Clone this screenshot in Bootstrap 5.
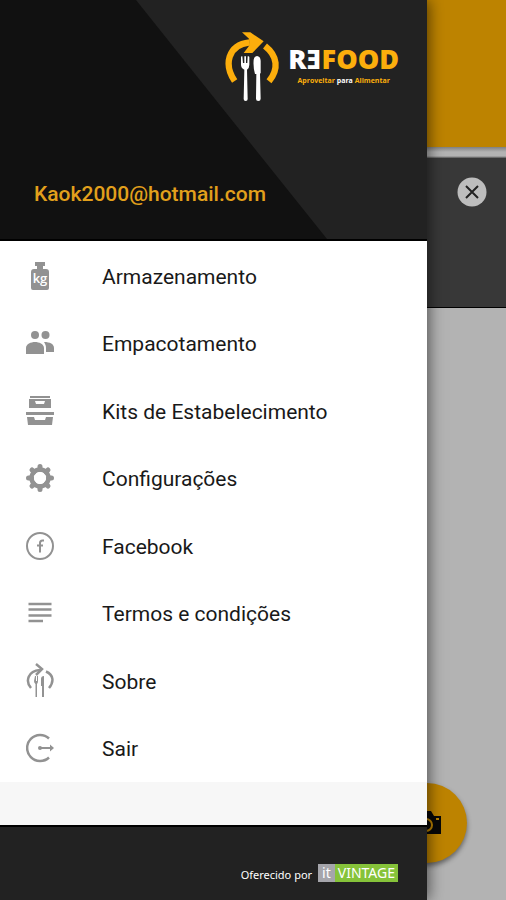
<!DOCTYPE html>
<html lang="pt">
<head>
<meta charset="utf-8">
<meta name="viewport" content="width=device-width, initial-scale=1">
<title>Refood</title>
<link href="https://cdn.jsdelivr.net/npm/bootstrap@5.3.0/dist/css/bootstrap.min.css" rel="stylesheet">
<style>
  body { font-family: Roboto, "Liberation Sans", sans-serif; background: #b3b3b3; }
  .app-screen { min-height: 100vh; }
  .app-bar { height: 147px; background: #bd8300; }
  .app-divider { height: 11px; background: linear-gradient(#808080, #b3b3b3 5px, #b3b3b3 9px, #555); }
  .notice { height: 150px; background: #383838; border-bottom: 1px solid #000; padding: 19px 19px 0 0; }
  .dismiss { width: 30px; height: 30px; }
  .drawer { width: calc(100% - 79px); z-index: 3; background: #fff; box-shadow: 2px 0 14px rgba(0, 0, 0, .55); }
  .drawer-head { height: 241px; padding: 31px 28px 31px 34px; border-bottom: 2px solid #000; background: #222; }
  .head-shade { z-index: -1; }
  .emblem { width: 56px; height: 72px; }
  .brand { padding-top: 10px; }
  .brand-name { font: 800 27px/36px "Open Sans", "Noto Sans", sans-serif; color: #fff; }
  .brand-tag { font: 700 7px/8px "Open Sans", "Noto Sans", sans-serif; color: #fff; }
  .gold { color: #fcae0c; }
  .account { font-size: 21px; line-height: 28px; font-weight: 500; color: #e2a01c; }
  .menu-list { padding-top: 1px; }
  .menu-link { padding: 0 26px; gap: 48px; font-size: 21px; line-height: 28px; color: #191919; }
  .menu-link:hover { background: #f2f2f2; }
  .menu-label { padding-top: 2px; }
  .menu-icon { width: 28px; height: 36px; color: #929292; }
  .drawer-gap { height: 43px; background: #f7f7f7; }
  .drawer-foot { height: 75px; padding: 0 29px 18px; gap: 6px; background: #222; border-top: 2px solid #000; color: #fff;
    font: 11px/14px "Noto Sans", sans-serif; }
  .vendor { font: 14px/18px "Noto Sans", sans-serif; color: #fff; }
  .vendor-it { background: #a5a5ab; padding: 0 4px; }
  .vendor-name { background: #86c33a; padding: 0 3px; }
  .fab { width: 80px; height: 80px; right: 39px; bottom: 37px; background: #bd8300; box-shadow: 0 3px 5px rgba(0, 0, 0, .45); z-index: 2; }
</style>
<script src="https://cdn.jsdelivr.net/npm/bootstrap@5.3.0/dist/js/bootstrap.bundle.min.js"></script>
</head>
<body>
<div class="app-screen position-relative overflow-hidden">
  <main>
    <div class="app-bar"></div>
    <div class="app-divider"></div>
    <section class="notice d-flex justify-content-end align-items-start">
      <button type="button" class="dismiss btn p-0 border-0 d-flex" aria-label="Fechar">
        <svg viewBox="0 0 30 30" width="30" height="30"><circle cx="15" cy="15" r="14.5" fill="#bdbdbd"/><path d="M9 9l12 12M21 9L9 21" stroke="#222" stroke-width="2"/></svg>
      </button>
    </section>
  </main>
  <button type="button" class="fab btn rounded-circle border-0 p-0 position-absolute d-flex align-items-center justify-content-center" aria-label="Fotografar">
    <svg viewBox="0 0 30 24" width="30" height="24"><path d="M0 5h7l3-5h9l3 5h7v18H0z" fill="#080808"/><circle cx="14" cy="14" r="6" fill="none" stroke="#bd8300" stroke-width="2"/><path d="M24 8h3" stroke="#bd8300" stroke-width="2"/></svg>
  </button>

  <aside class="drawer position-absolute top-0 bottom-0 start-0 d-flex flex-column">
    <header class="drawer-head position-relative z-0 d-flex flex-column justify-content-between">
      <svg class="head-shade position-absolute top-0 start-0 w-100 h-100" viewBox="0 0 427 238" preserveAspectRatio="none" aria-hidden="true"><path d="M0 0H136L327 238H0z" fill="#111"/></svg>
      <div class="d-flex justify-content-end gap-2">
        <svg class="emblem" viewBox="45 33 168 216" aria-hidden="true">
          <g fill="none" stroke="#fcae0c" stroke-width="19"><path d="M77 183C45 136 54 75 122 67"/><path d="M168 78C206 108 210 147 180 184"/></g>
          <path d="M99 37h25l40 27-34 35h-26l18-24-2-19z" fill="#fcae0c"/>
          <g fill="#fff"><path d="M96 112q0-4 4-3l2 20h4v-20h5v20h4l1-20q5-1 5 3v22q0 10-7 15l2 88q0 6-6 6t-6-6l2-88q-10-5-10-15z"/><path d="M134 119q1-10 10-11 10 1 11 14v37l-2 2 2 75q0 7-7 7t-7-7l1-74h-4q-6-20-4-43z"/></g>
        </svg>
        <div class="brand d-flex flex-column align-items-center">
          <div class="brand-name">RƎ<span class="gold">FOOD</span></div>
          <div class="brand-tag"><span class="gold">Aproveitar</span> para <span class="gold">Alimentar</span></div>
        </div>
      </div>
      <div class="account">Kaok2000@hotmail.com</div>
    </header>

    <nav class="menu-list flex-grow-1 d-flex flex-column" aria-label="Menu principal">
      <a href="#" class="menu-link flex-fill d-flex align-items-center text-decoration-none">
        <svg class="menu-icon" viewBox="0 0 28 36"><path fill="currentColor" d="M9 4h10v4h-2v3h3q3 0 3 3v16q0 2-2 2H7q-2 0-2-2V14q0-3 3-3h3V8H9z"/><text x="14" y="25" text-anchor="middle" font-family="Open Sans, sans-serif" font-weight="600" font-size="13" fill="#fff">kg</text></svg>
        <span class="menu-label">Armazenamento</span></a>
      <a href="#" class="menu-link flex-fill d-flex align-items-center text-decoration-none">
        <svg class="menu-icon" viewBox="0 0 28 36"><g fill="currentColor"><circle cx="9" cy="10" r="4"/><circle cx="19.500" cy="10" r="4"/><path d="M0 29v-6c0-4 5-6 9-6s9 2 9 6v6zM18 17c6 0 10 2 10 6v4h-8v-4c0-3-1-4-2-6z"/></g></svg>
        <span class="menu-label">Empacotamento</span></a>
      <a href="#" class="menu-link flex-fill d-flex align-items-center text-decoration-none">
        <svg class="menu-icon" viewBox="0 0 28 36"><path fill="currentColor" d="M4 3h20v2H4zM3 6h22v9H3zM0 19h28v3H0zM1 24h7l1 3h10l1-3h7l-1 8H2z"/><path d="M9 8h10l-1 3h-8z" fill="#fff"/></svg>
        <span class="menu-label">Kits de Estabelecimento</span></a>
      <a href="#" class="menu-link flex-fill d-flex align-items-center text-decoration-none">
        <svg class="menu-icon" viewBox="0 0 28 36"><g fill="none" stroke="currentColor"><circle cx="14" cy="18" r="8.500" stroke-width="4.500"/><path stroke-width="5" stroke-linecap="round" d="M14 6.500v3M14 26.500v3M2.500 18h3M22.500 18h3M6 10l2 2M20 24l2 2M6 26l2-2M20 12l2-2"/></g></svg>
        <span class="menu-label">Configurações</span></a>
      <a href="#" class="menu-link flex-fill d-flex align-items-center text-decoration-none">
        <svg class="menu-icon" viewBox="0 0 28 36"><g fill="none" stroke="currentColor" stroke-width="2"><circle cx="14" cy="18" r="13"/><path d="M18 12.500h-1.500q-2.500 0-2.500 2.500v9.500M11 17.500h6"/></g></svg>
        <span class="menu-label">Facebook</span></a>
      <a href="#" class="menu-link flex-fill d-flex align-items-center text-decoration-none">
        <svg class="menu-icon" viewBox="0 0 28 36"><path d="M2.500 9h23M2.500 14.500h23M2.500 20.500h23M2.500 26h14.500" stroke="currentColor" stroke-width="2.500"/></svg>
        <span class="menu-label">Termos e condições</span></a>
      <a href="#" class="menu-link flex-fill d-flex align-items-center text-decoration-none">
        <svg class="menu-icon" viewBox="0 0 28 36"><g fill="none" stroke="currentColor" stroke-width="2.500"><path d="M5 25C-1 18 2 8 14 7M20 8.500C28 12 28 19 23 25"/><path d="M10 1l6 5-6 6"/></g><path fill="currentColor" d="M9 13h1v5h1v-5h1v5q0 2-1 3v13H9.500V21Q8 20 8 18zM15 16q0-3 3-3v21h-2V23h-1z"/></svg>
        <span class="menu-label">Sobre</span></a>
      <a href="#" class="menu-link flex-fill d-flex align-items-center text-decoration-none">
        <svg class="menu-icon" viewBox="0 0 28 36"><g fill="none" stroke="currentColor" stroke-width="2.500"><path d="M23 8.500a13 13 0 1 0 0 19"/><path d="M13 18h12" stroke-width="2"/></g><circle cx="14" cy="18" r="2" fill="currentColor"/><path d="M24 14.500l4 3.500-4 3.500z" fill="currentColor"/></svg>
        <span class="menu-label">Sair</span></a>
    </nav>
    <div class="drawer-gap"></div>
    <footer class="drawer-foot d-flex justify-content-end align-items-end">
      <span>Oferecido por</span>
      <span class="vendor d-flex"><span class="vendor-it">it</span><span class="vendor-name">VINTAGE</span></span>
    </footer>
  </aside>
</div>
</body>
</html>
